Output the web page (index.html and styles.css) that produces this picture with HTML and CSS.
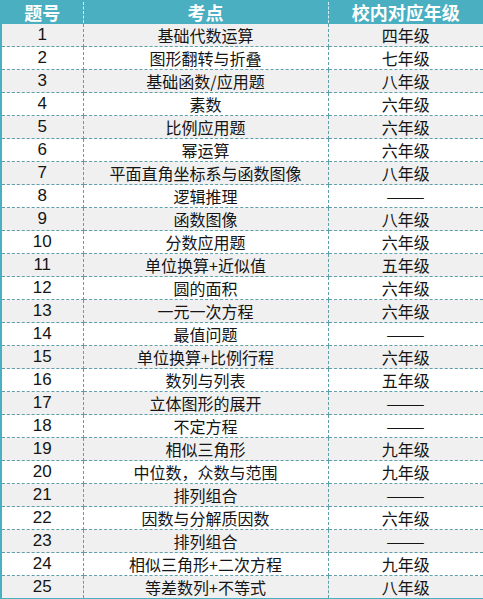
FILE: index.html
```html
<!DOCTYPE html>
<html lang="zh">
<head>
<meta charset="utf-8">
<link rel="stylesheet" href="styles.css">
</head>
<body>
<table class="sheet">
<colgroup><col class="c1"><col class="c2"><col class="c3"></colgroup>
<thead>
<tr><th>题号</th><th>考点</th><th>校内对应年级</th></tr>
</thead>
<tbody>
<tr><td class="num">1</td><td>基础代数运算</td><td>四年级</td></tr>
<tr><td class="num">2</td><td>图形翻转与折叠</td><td>七年级</td></tr>
<tr><td class="num">3</td><td>基础函数/应用题</td><td>八年级</td></tr>
<tr><td class="num">4</td><td>素数</td><td>六年级</td></tr>
<tr><td class="num">5</td><td>比例应用题</td><td>六年级</td></tr>
<tr><td class="num">6</td><td>幂运算</td><td>六年级</td></tr>
<tr><td class="num">7</td><td>平面直角坐标系与函数图像</td><td>八年级</td></tr>
<tr><td class="num">8</td><td>逻辑推理</td><td><span class="dash">——</span></td></tr>
<tr><td class="num">9</td><td>函数图像</td><td>八年级</td></tr>
<tr><td class="num">10</td><td>分数应用题</td><td>六年级</td></tr>
<tr><td class="num">11</td><td>单位换算+近似值</td><td>五年级</td></tr>
<tr><td class="num">12</td><td>圆的面积</td><td>六年级</td></tr>
<tr><td class="num">13</td><td>一元一次方程</td><td>六年级</td></tr>
<tr><td class="num">14</td><td>最值问题</td><td><span class="dash">——</span></td></tr>
<tr><td class="num">15</td><td>单位换算+比例行程</td><td>六年级</td></tr>
<tr><td class="num">16</td><td>数列与列表</td><td>五年级</td></tr>
<tr><td class="num">17</td><td>立体图形的展开</td><td><span class="dash">——</span></td></tr>
<tr><td class="num">18</td><td>不定方程</td><td><span class="dash">——</span></td></tr>
<tr><td class="num">19</td><td>相似三角形</td><td>九年级</td></tr>
<tr><td class="num">20</td><td>中位数，众数与范围</td><td>九年级</td></tr>
<tr><td class="num">21</td><td>排列组合</td><td><span class="dash">——</span></td></tr>
<tr><td class="num">22</td><td>因数与分解质因数</td><td>六年级</td></tr>
<tr><td class="num">23</td><td>排列组合</td><td><span class="dash">——</span></td></tr>
<tr><td class="num">24</td><td>相似三角形+二次方程</td><td>九年级</td></tr>
<tr><td class="num">25</td><td>等差数列+不等式</td><td>八年级</td></tr>
</tbody>
</table>
</body>
</html>
```
FILE: styles.css
```css
html, body {
  margin: 0;
  padding: 0;
  background: #ffffff;
}
.sheet {
  width: 483px;
  table-layout: fixed;
  border-collapse: collapse;
  border: 2px solid #4aafc1;
  font-family: "Noto Sans CJK SC", "Microsoft YaHei", sans-serif;
  color: #151515;
}
.c1 { width: 82px; }
.c2 { width: 245px; }
.c3 { width: 156px; }
.sheet th {
  background: #4aafc1;
  color: #ffffff;
  font-weight: bold;
  font-size: 18px;
  height: 21px;
  line-height: 21px;
  padding: 0;
  text-align: center;
  vertical-align: middle;
  border-left: 1px dashed #d8eef2;
  border-bottom: 1px solid #4aafc1;
  white-space: nowrap;
}
.sheet th:first-child { border-left: none; }
.sheet td {
  height: 22px;
  line-height: 22px;
  padding: 0;
  font-size: 16px;
  text-align: center;
  border: 1px dashed #5f9fab;
  white-space: nowrap;
}
.sheet td.num {
  font-family: "Liberation Sans", "Open Sans", sans-serif;
  font-size: 17px;
}
.dash {
  display: inline-block;
  transform: scaleX(1.45);
}
.sheet tbody tr:nth-child(odd) td { background: #f0f0f0; }
.sheet tbody tr:nth-child(even) td { background: #ffffff; }
```
